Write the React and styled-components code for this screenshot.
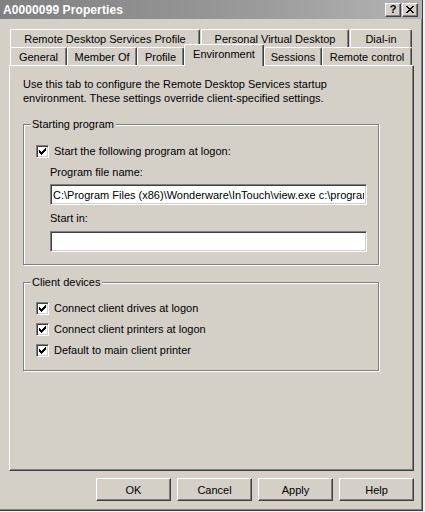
import React from "react";
import styled, { createGlobalStyle, css } from "styled-components";

const GlobalStyle = createGlobalStyle`
  body {
    margin: 0;
    background: #f2f2f2;
    font-family: "Liberation Sans", Arial, sans-serif;
    font-size: 11px;
    color: #000;
  }
`;

const Window = styled.div`
  box-sizing: border-box;
  width: 423px;
  height: 511px;
  background: #d4d0c8;
  border-right: 1px solid #404040;
  border-bottom: 1px solid #404040;
  box-shadow: inset -1px -1px 0 #808080;
  display: flex;
  flex-direction: column;
`;

const TitleBar = styled.div`
  height: 19px;
  display: flex;
  align-items: center;
  padding: 0 4px 0 3px;
  background: linear-gradient(90deg, #808080 0%, #9a9a9a 60%, #b4b4b4 100%);
`;

const Title = styled.div`
  flex: 1;
  color: #fff;
  font-weight: bold;
  font-size: 12px;
  letter-spacing: 0.1px;
`;

const CaptionButton = styled.div`
  box-sizing: border-box;
  width: 16px;
  height: 14px;
  margin-left: ${props => (props.gap ? "1px" : "0")};
  background: #d4d0c8;
  border: 1px solid;
  border-color: #fff #404040 #404040 #fff;
  box-shadow: inset -1px -1px 0 #808080;
  display: flex;
  align-items: center;
  justify-content: center;
  font-weight: bold;
  font-size: 11px;
  line-height: 1;
`;

const Body = styled.div`
  padding: 10px 8px 0 9px;
  display: flex;
  flex-direction: column;
`;

const TabRow = styled.div`
  display: flex;
  align-items: flex-end;
  height: 18px;
  padding-left: 1px;
`;

const Tab = styled.div`
  box-sizing: border-box;
  width: ${props => props.width}px;
  height: 18px;
  flex-shrink: 0;
  background: #d4d0c8;
  border-top: 1px solid #fff;
  border-left: 1px solid #fff;
  border-right: 1px solid #404040;
  border-radius: 2px 2px 0 0;
  box-shadow: inset -1px 0 0 #808080;
  display: flex;
  align-items: center;
  justify-content: center;
  white-space: nowrap;
  padding-top: 1px;

  ${props =>
    props.active &&
    css`
      position: relative;
      z-index: 1;
      height: 22px;
      margin-bottom: -1px;
      padding-top: 0;
      padding-bottom: 4px;
    `};
`;

const Panel = styled.div`
  box-sizing: border-box;
  width: 405px;
  height: 406px;
  border: 1px solid;
  border-color: #fff #404040 #404040 #fff;
  box-shadow: inset -1px -1px 0 #808080;
  padding: 11px 13px 0 13px;
  display: flex;
  flex-direction: column;
`;

const Description = styled.p`
  margin: 0;
  line-height: 14px;
`;

const Group = styled.div`
  position: relative;
  box-sizing: border-box;
  width: 356px;
  margin-top: ${props => props.top}px;
  padding: ${props => props.pad};
  border: 1px solid #808080;
  box-shadow: inset 1px 1px 0 #fff, 1px 1px 0 #fff;
  display: flex;
  flex-direction: column;
`;

const Legend = styled.span`
  position: absolute;
  top: -8px;
  left: 7px;
  padding: 0 2px 0 1px;
  background: #d4d0c8;
  line-height: 14px;
`;

const CheckRow = styled.label`
  display: flex;
  align-items: center;
  height: 14px;
  margin-top: ${props => props.top || 0}px;
`;

const Box = styled.span`
  box-sizing: border-box;
  width: 13px;
  height: 13px;
  margin-right: 5px;
  background: #fff;
  border: 1px solid;
  border-color: #808080 #fff #fff #808080;
  box-shadow: inset 1px 1px 0 #404040, inset -1px -1px 0 #d4d0c8;
  display: flex;
  align-items: center;
  justify-content: center;
`;

const FieldLabel = styled.div`
  line-height: 14px;
  margin: ${props => props.top}px 0 0 14px;
`;

const TextBox = styled.input`
  box-sizing: border-box;
  width: 317px;
  height: 21px;
  margin: ${props => props.top}px 0 0 14px;
  padding: 0 2px;
  background: #fff;
  border: 1px solid;
  border-color: #808080 #fff #fff #808080;
  box-shadow: inset 1px 1px 0 #404040, inset -1px -1px 0 #d4d0c8;
  font-family: "Liberation Sans", Arial, sans-serif;
  font-size: 11px;
  color: #000;
  outline: none;
`;

const ButtonBar = styled.div`
  display: flex;
  justify-content: flex-end;
  gap: 6px;
  margin-top: 7px;
  width: 405px;
`;

const Button = styled.div`
  box-sizing: border-box;
  width: 75px;
  height: 23px;
  border: 1px solid;
  border-color: #fff #404040 #404040 #fff;
  box-shadow: inset -1px -1px 0 #808080;
  display: flex;
  align-items: center;
  justify-content: center;
`;

const CheckMark = () => (
  <svg width="7" height="7" viewBox="0 0 7 7" shapeRendering="crispEdges">
    {[2, 3, 4, 3, 2, 1, 0].map((y, x) => (
      <rect key={x} x={x} y={y} width="1" height="3" fill="#000" />
    ))}
  </svg>
);

const CloseGlyph = () => (
  <svg width="8" height="7" viewBox="0 0 8 7" shapeRendering="crispEdges">
    {[0, 1, 2, 3, 4, 5, 6].map(i => (
      <React.Fragment key={i}>
        <rect x={i} y={i} width="2" height="1" fill="#000" />
        <rect x={6 - i} y={i} width="2" height="1" fill="#000" />
      </React.Fragment>
    ))}
  </svg>
);

const Check = ({ top, children }) => (
  <CheckRow top={top}>
    <Box>
      <CheckMark />
    </Box>
    {children}
  </CheckRow>
);

const topTabs = [
  { name: "Remote Desktop Services Profile", width: 190 },
  { name: "Personal Virtual Desktop", width: 148 },
  { name: "Dial-in", width: 62 },
];

const bottomTabs = [
  { name: "General", width: 57 },
  { name: "Member Of", width: 70 },
  { name: "Profile", width: 47 },
  { name: "Environment", width: 80, active: true },
  { name: "Sessions", width: 58 },
  { name: "Remote control", width: 90 },
];

export default function App() {
  return (
    <>
      <GlobalStyle />
      <Window>
        <TitleBar>
          <Title>A0000099 Properties</Title>
          <CaptionButton>?</CaptionButton>
          <CaptionButton gap>
            <CloseGlyph />
          </CaptionButton>
        </TitleBar>
        <Body>
          <TabRow style={{ gap: 1 }}>
            {topTabs.map(t => (
              <Tab key={t.name} width={t.width}>
                {t.name}
              </Tab>
            ))}
          </TabRow>
          <TabRow>
            {bottomTabs.map(t => (
              <Tab key={t.name} width={t.width} active={t.active}>
                {t.name}
              </Tab>
            ))}
          </TabRow>
          <Panel>
            <Description>
              Use this tab to configure the Remote Desktop Services startup
              <br />
              environment. These settings override client-specified settings.
            </Description>

            <Group top={19} pad="19px 0 12px 12px">
              <Legend>Starting program</Legend>
              <Check>Start the following program at logon:</Check>
              <FieldLabel top={7}>Program file name:</FieldLabel>
              <TextBox
                top={5}
                readOnly
                value="C:\Program Files (x86)\Wonderware\InTouch\view.exe c:\program files (x86)\wonderware"
              />
              <FieldLabel top={6}>Start in:</FieldLabel>
              <TextBox top={6} readOnly value="" />
            </Group>

            <Group top={17} pad="18px 0 13px 12px">
              <Legend>Client devices</Legend>
              <Check>Connect client drives at logon</Check>
              <Check top={7}>Connect client printers at logon</Check>
              <Check top={7}>Default to main client printer</Check>
            </Group>
          </Panel>
          <ButtonBar>
            <Button>OK</Button>
            <Button>Cancel</Button>
            <Button>Apply</Button>
            <Button>Help</Button>
          </ButtonBar>
        </Body>
      </Window>
    </>
  );
}
